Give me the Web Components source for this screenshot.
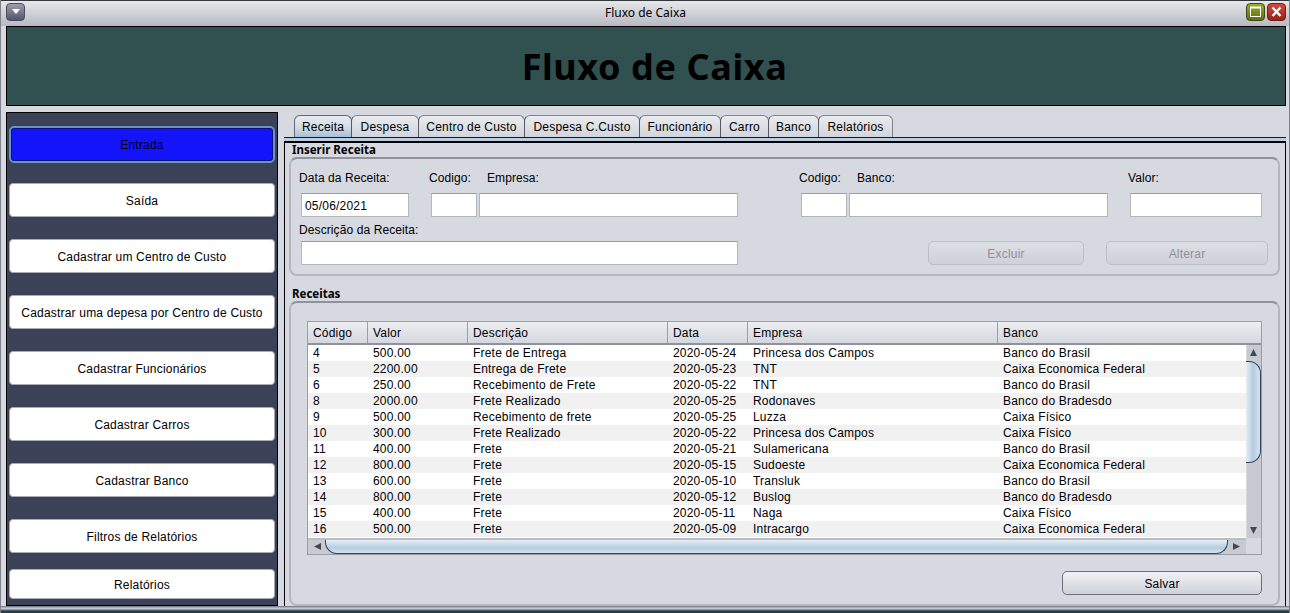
<!DOCTYPE html>
<html lang="pt">
<head>
<meta charset="utf-8">
<title>Fluxo de Caixa</title>
<style>
	html, body { margin: 0; height: 100%; overflow: hidden; background: #d6d9e0 }
	body { font: 12px "Liberation Sans", Arial, sans-serif; color: #000 }
</style>
</head>
<body>

<fx-window>
	<fx-titlebar slot="top">Fluxo de Caixa</fx-titlebar>
	<fx-banner slot="top">Fluxo de Caixa</fx-banner>
	<fx-sidebar slot="side">
		<fx-menu-button active>Entrada</fx-menu-button>
		<fx-menu-button>Saída</fx-menu-button>
		<fx-menu-button>Cadastrar um Centro de Custo</fx-menu-button>
		<fx-menu-button>Cadastrar uma depesa por Centro de Custo</fx-menu-button>
		<fx-menu-button>Cadastrar Funcionários</fx-menu-button>
		<fx-menu-button>Cadastrar Carros</fx-menu-button>
		<fx-menu-button>Cadastrar Banco</fx-menu-button>
		<fx-menu-button>Filtros de Relatórios</fx-menu-button>
		<fx-menu-button last>Relatórios</fx-menu-button>
	</fx-sidebar>
	<fx-tabs slot="main">
		<fx-tab slot="tabs" selected>Receita</fx-tab>
		<fx-tab slot="tabs" style="width:68px">Despesa</fx-tab>
		<fx-tab slot="tabs" style="width:107px">Centro de Custo</fx-tab>
		<fx-tab slot="tabs" style="width:116px">Despesa C.Custo</fx-tab>
		<fx-tab slot="tabs" style="width:82px">Funcionário</fx-tab>
		<fx-tab slot="tabs" style="width:49px">Carro</fx-tab>
		<fx-tab slot="tabs" style="width:51px">Banco</fx-tab>
		<fx-tab slot="tabs" style="width:75px">Relatórios</fx-tab>

		<fx-group title="Inserir Receita" style="height:133px">
			<fx-receita-form></fx-receita-form>
		</fx-group>
		<fx-group title="Receitas" class="grow" style="margin-top:11px">
			<fx-receitas-table></fx-receitas-table>
			<fx-button style="width:200px;height:24px;margin:16px 0 0 771px">Salvar</fx-button>
		</fx-group>
	</fx-tabs>
</fx-window>

<script>
////////////////////////////////////////////////////////////////
const
shadow = ( host, html ) => host.attachShadow( { mode: 'open' } ).innerHTML = html

const
FONT = `font: 12px "Liberation Sans", Arial, sans-serif; letter-spacing: .2px`

class
FxWindow extends HTMLElement {
	constructor() {
		super()
		shadow( this, `
			<style>
				:host {
					display: flex; flex-direction: column; box-sizing: border-box;
					width: 1290px; height: 613px; background: #d6d9e0;
					border-top: 1px solid #33363d; ${FONT}
				}
				.body { display: flex; flex: none; height: 494px; margin: 6px 0 0 6px; gap: 6px }
				.side { display: block; flex: none }
				.main { display: block; flex: none; width: 1002px }
				.foot { flex: 1; margin-top: 0; background: linear-gradient( #70747c 0, #8f939b 1px, #c4c7ce 2px, #c4c7ce 3px, #6d7179 4px, #20404a 5px ) }
				.frame { position: absolute; pointer-events: none; left: 0; top: 0; width: 1290px; height: 613px; box-sizing: border-box;
					border-left: 1px solid #7d8189; border-right: 1px solid #7d8189 }
			</style>
			<slot name="top"></slot>
			<div class="body">
				<div class="side"><slot name="side"></slot></div>
				<div class="main"><slot name="main"></slot></div>
			</div>
			<div class="foot"></div>
			<div class="frame"></div>
		` )
	}
}
customElements.define( 'fx-window', FxWindow )

class
FxTitlebar extends HTMLElement {
	constructor() {
		super()
		shadow( this, `
			<style>
				:host {
					display: flex; align-items: center; height: 25px; flex: none; box-sizing: border-box;
					padding: 0 4px 3px 6px; color: #000;
					background: linear-gradient( #e6e7ea, #bbbec6 90%, #b6b9c1 );
				}
				.name { flex: 1; text-align: center; font: 12px "Noto Sans", Tahoma, sans-serif; letter-spacing: 0; padding-left: 20px }
				.btn { display: block; width: 19px; height: 18px; border-radius: 4px; box-sizing: border-box }
				.menu { background: linear-gradient( #9aa0ae, #4f5568 ); border: 1px solid #4a4e5a }
				.max { background: linear-gradient( #97aa2c, #5f6f10 ); border: 1px solid #3e4a10; margin-right: 2px }
				.close { background: linear-gradient( #d4483c, #97231a ); border: 1px solid #6e2018 }
				svg { display: block }
			</style>
			<span class="btn menu"><svg width="17" height="16"><path d="M5 5h8l-4 5z" fill="#fff"/></svg></span>
			<span class="name"><slot></slot></span>
			<span class="btn max"><svg width="17" height="16"><rect x="3.5" y="3.5" width="10" height="9" fill="none" stroke="#fff"/><path d="M3 3.5h11" stroke="#fff" stroke-width="2"/></svg></span>
			<span class="btn close"><svg width="17" height="16"><path d="M4.5 3.5l8 8.5M12.5 3.5l-8 8.5" stroke="#fff" stroke-width="2.4"/></svg></span>
		` )
	}
}
customElements.define( 'fx-titlebar', FxTitlebar )

class
FxBanner extends HTMLElement {
	constructor() {
		super()
		shadow( this, `
			<style>
				:host {
					display: flex; align-items: center; justify-content: center; flex: none; box-sizing: border-box;
					height: 80px; margin: 0 4px 0 6px; padding-left: 17px; background: #315050; border: 1px solid #000;
					font: bold 36px "Noto Sans", Tahoma, sans-serif; color: #000; letter-spacing: .6px;
				}
			</style>
			<slot></slot>
		` )
	}
}
customElements.define( 'fx-banner', FxBanner )

class
FxSidebar extends HTMLElement {
	constructor() {
		super()
		shadow( this, `
			<style>
				:host {
					display: flex; flex-direction: column; gap: 22px; box-sizing: border-box;
					width: 272px; height: 494px; padding: 13px 2px 0; overflow: hidden;
					background: #3b4257; border: 1px solid #000;
				}
			</style>
			<slot></slot>
		` )
	}
}
customElements.define( 'fx-sidebar', FxSidebar )

class
FxMenuButton extends HTMLElement {
	constructor() {
		super()
		shadow( this, `
			<style>
				:host {
					display: flex; align-items: center; justify-content: center; flex: none; box-sizing: border-box;
					height: 34px; padding-top: 1px; background: #fff; border: 1px solid #a8abb3; border-radius: 4px; color: #000;
				}
				:host( [active] ) {
					height: 37px; margin-bottom: -2px; padding-top: 0; background: #1414fb; border: 2px solid #6a93bd; border-radius: 5px;
					box-shadow: inset 0 0 0 1px #10107a;
				}
				:host( [last] ) { height: 30px; margin-top: -6px }
			</style>
			<slot></slot>
		` )
	}
}
customElements.define( 'fx-menu-button', FxMenuButton )

class
FxTabs extends HTMLElement {
	constructor() {
		super()
		shadow( this, `
			<style>
				:host { display: flex; flex-direction: column; height: 494px; box-sizing: border-box }
				.strip { display: flex; height: 26px; padding: 3px 0 0 10px; box-sizing: border-box; border-bottom: 1px solid #111a2a; flex: none }
				.rule { height: 5px; box-sizing: border-box; background: #bacde0; border-bottom: 2px solid #000; flex: none }
				.panel { flex: 1; display: flex; flex-direction: column; border-left: 1px solid #000; border-right: 1px solid #000; padding: 0 4px; min-height: 0 }
				::slotted( .grow ) { flex: 1; min-height: 0 }
			</style>
			<div class="strip"><slot name="tabs"></slot></div>
			<div class="rule"></div>
			<div class="panel"><slot></slot></div>
		` )
	}
}
customElements.define( 'fx-tabs', FxTabs )

class
FxTab extends HTMLElement {
	constructor() {
		super()
		shadow( this, `
			<style>
				:host {
					display: flex; align-items: center; justify-content: center; box-sizing: border-box; width: 58px; flex: none;
					background: linear-gradient( #e9ebef, #d2d5dc ); border: 1px solid #7f838c; border-bottom: 0;
					border-left-color: #555962; border-radius: 6px 6px 0 0; margin-left: -1px; padding-top: 1px;
				}
				:host( [selected] ) { margin-left: 0; background: linear-gradient( #e6ebf1, #d5dde6 50%, #a7c1d8 ); border-color: #5f6a78 }
			</style>
			<slot></slot>
		` )
	}
}
customElements.define( 'fx-tab', FxTab )

class
FxGroup extends HTMLElement {
	constructor() {
		super()
		shadow( this, `
			<style>
				:host { display: flex; flex-direction: column; box-sizing: border-box; flex: none }
				.title { height: 14px; padding-left: 3px; font: bold 11.5px/14px "Noto Sans", Tahoma, sans-serif; letter-spacing: 0 }
				.box {
					flex: 1; box-sizing: border-box; margin-right: 1px; min-height: 0;
					border: 2px solid #b4b7be; border-top-color: #8f929a; border-radius: 8px; background: #d6d9e0;
				}
			</style>
			<div class="title"></div>
			<div class="box"><slot></slot></div>
		` )
		this.shadowRoot.querySelector( '.title' ).textContent = this.getAttribute( 'title' )
		this.removeAttribute( 'title' )
	}
}
customElements.define( 'fx-group', FxGroup )

class
FxField extends HTMLElement {
	constructor() {
		super()
		shadow( this, `
			<style>
				:host {
					display: flex; align-items: center; box-sizing: border-box; height: 24px; padding: 1px 3px 0;
					background: #fff; border: 1px solid #b3b6bc; border-top-color: #9a9da4;
				}
			</style>
			<slot></slot>
		` )
	}
}
customElements.define( 'fx-field', FxField )

class
FxButton extends HTMLElement {
	constructor() {
		super()
		shadow( this, `
			<style>
				:host {
					display: flex; align-items: center; justify-content: center; box-sizing: border-box; height: 24px; flex: none;
					padding-top: 1px; background: linear-gradient( #f0f1f3, #ced1d8 ); border: 1px solid #6d7079; border-radius: 5px;
				}
				:host( [disabled] ) {
					background: linear-gradient( #dcdfe4, #ced1d8 ); border-color: #bcbfc6; color: #8e9198;
				}
			</style>
			<slot></slot>
		` )
	}
}
customElements.define( 'fx-button', FxButton )

class
FxReceitaForm extends HTMLElement {
	constructor() {
		super()
		shadow( this, `
			<style>
				:host { display: block; padding: 10px 0 0 10px }
				.grid { display: grid; grid-template-columns: 108px 22px 46px 2px 259px 63px 46px 2px 259px 22px 132px }
				.lab { height: 24px; line-height: 18px; margin-left: -2px; white-space: nowrap; letter-spacing: .08px }
				.lab.indent { margin-left: 8px }
				.rowlab { height: 24px; line-height: 26px; margin: 0 0 0 -2px; letter-spacing: .1px }
				.row { display: flex }
				.desc { width: 437px }
				fx-button:first-of-type { width: 156px; margin-left: 190px }
				fx-button:last-of-type { width: 162px; margin-left: 22px }
			</style>
			<div class="grid">
				<div class="lab">Data da Receita:</div><div></div>
				<div class="lab">Codigo:</div><div></div>
				<div class="lab indent">Empresa:</div><div></div>
				<div class="lab">Codigo:</div><div></div>
				<div class="lab indent">Banco:</div><div></div>
				<div class="lab">Valor:</div>

				<fx-field>05/06/2021</fx-field><div></div>
				<fx-field></fx-field><div></div>
				<fx-field></fx-field><div></div>
				<fx-field></fx-field><div></div>
				<fx-field></fx-field><div></div>
				<fx-field></fx-field>
			</div>
			<div class="rowlab">Descrição da Receita:</div>
			<div class="row">
				<fx-field class="desc"></fx-field>
				<fx-button disabled>Excluir</fx-button>
				<fx-button disabled>Alterar</fx-button>
			</div>
		` )
	}
}
customElements.define( 'fx-receita-form', FxReceitaForm )

const
RECEITAS = [
	[ '4',	'500.00',	'Frete de Entrega',		'2020-05-24',	'Princesa dos Campos',	'Banco do Brasil' ]
,	[ '5',	'2200.00',	'Entrega de Frete',		'2020-05-23',	'TNT',					'Caixa Economica Federal' ]
,	[ '6',	'250.00',	'Recebimento de Frete',	'2020-05-22',	'TNT',					'Banco do Brasil' ]
,	[ '8',	'2000.00',	'Frete Realizado',		'2020-05-25',	'Rodonaves',			'Banco do Bradesdo' ]
,	[ '9',	'500.00',	'Recebimento de frete',	'2020-05-25',	'Luzza',				'Caixa Físico' ]
,	[ '10',	'300.00',	'Frete Realizado',		'2020-05-22',	'Princesa dos Campos',	'Caixa Físico' ]
,	[ '11',	'400.00',	'Frete',				'2020-05-21',	'Sulamericana',			'Banco do Brasil' ]
,	[ '12',	'800.00',	'Frete',				'2020-05-15',	'Sudoeste',				'Caixa Economica Federal' ]
,	[ '13',	'600.00',	'Frete',				'2020-05-10',	'Transluk',				'Banco do Brasil' ]
,	[ '14',	'800.00',	'Frete',				'2020-05-12',	'Buslog',				'Banco do Bradesdo' ]
,	[ '15',	'400.00',	'Frete',				'2020-05-11',	'Naga',					'Caixa Físico' ]
,	[ '16',	'500.00',	'Frete',				'2020-05-09',	'Intracargo',			'Caixa Economica Federal' ]
]
const
HEADS = [ 'Código', 'Valor', 'Descrição', 'Data', 'Empresa', 'Banco' ]

class
FxReceitasTable extends HTMLElement {
	constructor() {
		super()
		const
		cells = row => row.map( t => `<span>${t}</span>` ).join( '' )
		shadow( this, `
			<style>
				:host {
					display: block; box-sizing: border-box; width: 955px; height: 234px; margin: 18px 0 0 16px;
					border: 1px solid #9a9da5; background: #d6d9e0; position: relative;
				}
				.head, .row { display: grid; grid-template-columns: 60px 100px 200px 80px 250px 1fr }
				.head {
					height: 23px; box-sizing: border-box; background: linear-gradient( #eceef1, #d4d7de );
					border-bottom: 2px solid #8f929a; line-height: 22px;
				}
				.head span { padding-left: 5px; border-left: 1px solid #9a9da5; margin-left: -1px; height: 21px }
				.head span:first-child { border: 0; margin: 0 }
				.view { display: flex; height: 193px; margin-top: 0 }
				.rows { width: 938px; background: #fff; flex: none; overflow: hidden }
				.row { height: 16px; line-height: 16px; white-space: nowrap }
				.row:nth-child( even ) { background: #f1f1f1 }
				.row span { padding-left: 5px }
				.vbar { position: relative; width: 15px; background: #c7cad1; border-left: 1px solid #d8dae0 }
				.vthumb {
					position: absolute; left: -1px; top: 16px; width: 15px; height: 102px; box-sizing: border-box;
					background: linear-gradient( 90deg, #e6eef5, #b4cde2 50%, #d5e2ee ); border: 1px solid #2e4258; border-left: 0;
					border-radius: 0 12px 12px 0;
				}
				.hbar { position: relative; height: 16px; width: 938px; border-top: 2px solid #b9bcc3; box-sizing: border-box; background: #c7cad1 }
				.hthumb {
					position: absolute; left: 17px; top: 0; width: 903px; height: 14px; box-sizing: border-box;
					background: linear-gradient( #e6eef5, #b4cde2 60%, #d5e2ee ); border: 1px solid #2e4258; border-top: 0;
					border-radius: 0 0 12px 12px;
				}
				svg { position: absolute; display: block }
			</style>
			<div class="head">${ cells( HEADS ) }</div>
			<div class="view">
				<div class="rows">${ RECEITAS.map( r => `<div class="row">${ cells( r ) }</div>` ).join( '' ) }</div>
				<div class="vbar">
					<svg style="left:3px;top:4px" width="7" height="7"><path d="M3.5 0L7 7H0z" fill="#44484f"/></svg>
					<div class="vthumb"></div>
					<svg style="left:3px;top:182px" width="7" height="7"><path d="M3.5 7L7 0H0z" fill="#44484f"/></svg>
				</div>
			</div>
			<div class="hbar">
				<svg style="left:6px;top:3px" width="7" height="7"><path d="M0 3.5L7 0v7z" fill="#44484f"/></svg>
				<div class="hthumb"></div>
				<svg style="left:925px;top:3px" width="7" height="7"><path d="M7 3.5L0 0v7z" fill="#44484f"/></svg>
			</div>
		` )
	}
}
customElements.define( 'fx-receitas-table', FxReceitasTable )
</script>
</body>
</html>
